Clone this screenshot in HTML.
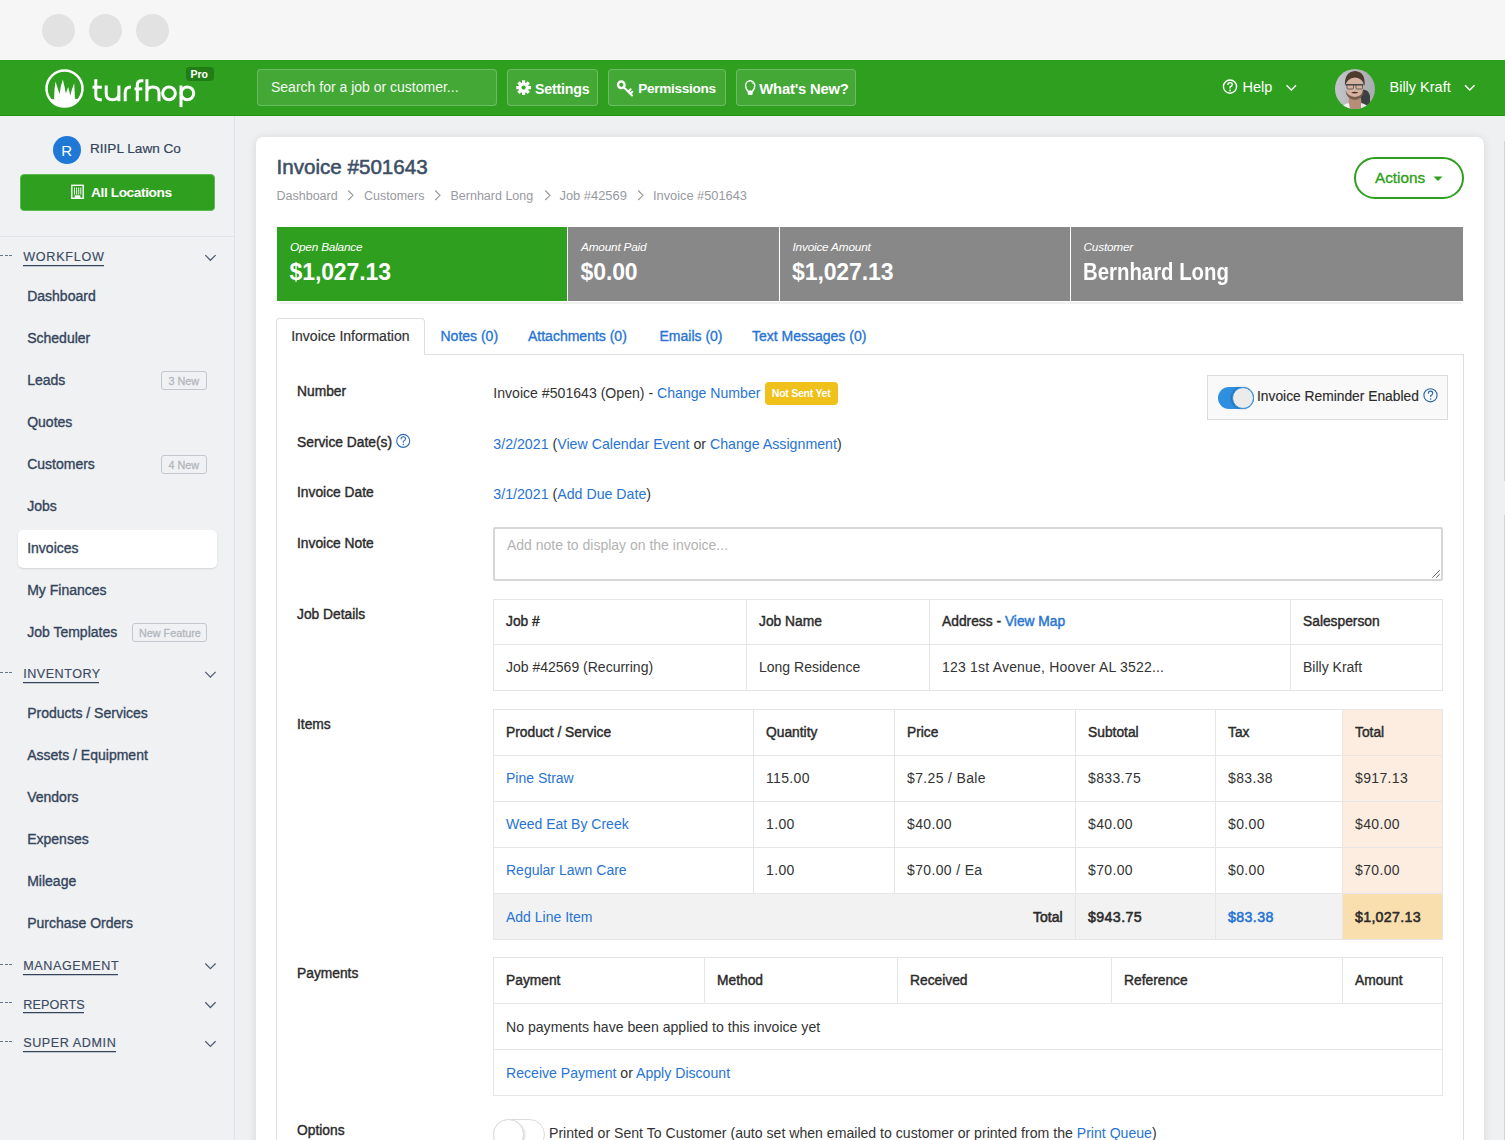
<!DOCTYPE html>
<html><head><meta charset="utf-8"><title>Invoice #501643</title>
<style>
html,body{margin:0;padding:0;}
body{width:1505px;height:1140px;overflow:hidden;position:relative;background:#eff0f2;font-family:"Liberation Sans",sans-serif;}
.t{position:absolute;white-space:nowrap;}
.r{position:absolute;box-sizing:border-box;}
svg{position:absolute;overflow:visible;}
</style></head><body>

<div class="r" style="left:0px;top:0px;width:1505px;height:60px;background:#f6f6f6;"></div>
<div class="r" style="left:42.0px;top:13.5px;width:33px;height:33px;border-radius:50%;background:#e2e2e2;"></div>
<div class="r" style="left:89.0px;top:13.5px;width:33px;height:33px;border-radius:50%;background:#e2e2e2;"></div>
<div class="r" style="left:136.0px;top:13.5px;width:33px;height:33px;border-radius:50%;background:#e2e2e2;"></div>
<div class="r" style="left:0px;top:60px;width:1505px;height:56px;background:#2f9f20;"></div>
<div class="r" style="left:0px;top:115px;width:1505px;height:1px;background:#23950f;"></div>
<svg style="left:0;top:0" width="1" height="1">
<defs><clipPath id="lc"><circle cx="64.5" cy="88.6" r="18.5"/></clipPath></defs>
<circle cx="64.5" cy="88.6" r="18" fill="none" stroke="#fff" stroke-width="2.5"/>
<g clip-path="url(#lc)"><path d="M44 102 Q50 98.5 54.2 99.3 Q54 90 55.5 81.5 Q57.5 88 59.6 94 Q60.5 86 62.8 79.6 Q64.8 87 65.8 93.5 Q67 90 68.2 87 Q69.4 91 70.2 95.5 Q71.8 89 74.2 83.3 Q74.8 92 74.9 98.8 Q79 98.5 85 102 L85 112 L44 112 Z" fill="#fff"/></g>
<g fill="none" stroke="#fff" stroke-width="3">
<path d="M95.8 79.2 V95.5 Q95.8 99.7 100 99.7 H101.8"/>
<path d="M92.5 87.2 H101.8"/>
<path d="M106.2 85.5 V93.5 Q106.2 99.7 112.5 99.7 Q118.9 99.7 118.9 93.5 V85.5 M118.9 93 V101.2"/>
<path d="M125.2 101.2 V92.5 Q125.2 87 131 87"/>
<path d="M137.3 101.2 V85 Q137.3 80.7 141.5 80.7 H143.4"/>
<path d="M134.5 88.9 H142.3"/>
<path d="M146.9 79.2 V101.2 M146.9 92.5 Q146.9 87 152.9 87 Q159 87 159 92.5 V101.2"/>
<circle cx="169" cy="93.35" r="6.35"/>
<path d="M181 85.5 V107.1"/>
<circle cx="187.4" cy="93.35" r="6.35"/>
</g>
</svg>
<div class="r" style="left:186px;top:67px;width:28px;height:14px;background:#237d17;border-radius:4px;"></div>
<div class="t" style="left:190.50px;top:69.31px;font-size:10.5px;line-height:10.5px;color:#fff;font-weight:bold;">Pro</div>
<div class="r" style="left:257px;top:69px;width:240px;height:37px;background:rgba(255,255,255,0.10);border:1.5px solid rgba(255,255,255,0.22);border-radius:4px;"></div>
<div class="t" style="left:271.00px;top:80.15px;font-size:14px;line-height:14px;color:#f3f8f2;">Search for a job or customer...</div>
<div class="r" style="left:507px;top:69px;width:91px;height:37px;background:rgba(255,255,255,0.10);border:1.5px solid rgba(255,255,255,0.22);border-radius:4px;"></div>
<div class="r" style="left:608px;top:69px;width:118px;height:37px;background:rgba(255,255,255,0.10);border:1.5px solid rgba(255,255,255,0.22);border-radius:4px;"></div>
<div class="r" style="left:736px;top:69px;width:120px;height:37px;background:rgba(255,255,255,0.10);border:1.5px solid rgba(255,255,255,0.22);border-radius:4px;"></div>
<div class="t" style="left:535.00px;top:81.98px;font-size:14.2px;line-height:14.2px;color:#fff;font-weight:bold;letter-spacing:-0.2px;">Settings</div>
<div class="t" style="left:638.30px;top:82.49px;font-size:13.6px;line-height:13.6px;color:#fff;font-weight:bold;letter-spacing:-0.3px;">Permissions</div>
<div class="t" style="left:759.30px;top:81.57px;font-size:14.8px;line-height:14.8px;color:#fff;font-weight:bold;letter-spacing:-0.2px;">What&#39;s New?</div>
<svg style="left:0;top:0" width="1" height="1">
<g transform="translate(523.6,87.6)" fill="#fff">
<circle r="5.2"/>
<g><rect x="-1.6" y="-7.3" width="3.2" height="3.4" transform="rotate(0)"/><rect x="-1.6" y="-7.3" width="3.2" height="3.4" transform="rotate(45)"/><rect x="-1.6" y="-7.3" width="3.2" height="3.4" transform="rotate(90)"/><rect x="-1.6" y="-7.3" width="3.2" height="3.4" transform="rotate(135)"/><rect x="-1.6" y="-7.3" width="3.2" height="3.4" transform="rotate(180)"/><rect x="-1.6" y="-7.3" width="3.2" height="3.4" transform="rotate(225)"/><rect x="-1.6" y="-7.3" width="3.2" height="3.4" transform="rotate(270)"/><rect x="-1.6" y="-7.3" width="3.2" height="3.4" transform="rotate(315)"/></g>
<circle r="2.1" fill="#3aa82c"/>
</g>
<g stroke="#fff" stroke-width="2" fill="none" stroke-linecap="round">
<circle cx="621.3" cy="84.8" r="3.3" stroke-width="2.3"/>
<path d="M623.8 87.3 L632 95.5 M628.2 91.7 L630.6 89.3 M630.3 93.8 L632.4 91.7"/>
</g>
<path d="M747.9 91.3 Q745.6 88.6 745.6 85.4 A4.6 4.6 0 0 1 754.8 85.4 Q754.8 88.6 752.5 91.3 Z" fill="none" stroke="#fff" stroke-width="1.4"/>
<path d="M751.6 82.2 Q753 82.8 753.3 84.3" fill="none" stroke="#fff" stroke-width="0.9"/>
<rect x="747.7" y="91" width="5" height="4" rx="1.6" fill="#fff"/>
</svg>
<svg style="left:0;top:0" width="1" height="1">
<circle cx="1230" cy="86.6" r="6.6" fill="none" stroke="#fff" stroke-width="1.4"/>
<path d="M1227.8 85 Q1227.8 82.6 1230 82.6 Q1232.3 82.6 1232.3 84.6 Q1232.3 86 1230.1 87 L1230.1 88.4" fill="none" stroke="#fff" stroke-width="1.4"/>
<circle cx="1230.1" cy="90.5" r="0.9" fill="#fff"/>
<path d="M1286.5 85.3 L1291.3 90 L1296 85.3" fill="none" stroke="#fff" stroke-width="1.4"/>
<path d="M1465 85.3 L1469.8 90 L1474.6 85.3" fill="none" stroke="#fff" stroke-width="1.4"/>
</svg>
<div class="t" style="left:1242.50px;top:79.93px;font-size:14.5px;line-height:14.5px;color:#fff;">Help</div>
<div class="t" style="left:1389.50px;top:80.03px;font-size:14.5px;line-height:14.5px;color:#fff;">Billy Kraft</div>
<svg style="left:0;top:0" width="1" height="1">
<defs><clipPath id="av"><circle cx="1355" cy="89" r="20"/></clipPath>
<linearGradient id="bgav" x1="0" y1="0" x2="1" y2="0"><stop offset="0" stop-color="#c4c5c9"/><stop offset="1" stop-color="#a9abae"/></linearGradient>
<filter id="blr" x="-20%" y="-20%" width="140%" height="140%"><feGaussianBlur stdDeviation="0.6"/></filter></defs>
<g clip-path="url(#av)">
<rect x="1335" y="69" width="40" height="40" fill="url(#bgav)"/>
<g filter="url(#blr)">
<path d="M1360 90 Q1368 88 1370 96 L1370 108 L1358 108 Z" fill="#3d3f42"/>
<path d="M1349 98 L1361 98 L1362 109 L1348 109 Z" fill="#b68d78"/>
<path d="M1340 109 Q1343 104 1349 103 L1350 109 Z" fill="#f2f2f2"/>
<path d="M1361 103 Q1367 104 1369 109 L1361 109 Z" fill="#e8e8e8"/>
<ellipse cx="1354.8" cy="88" rx="8.3" ry="11" fill="#d6b3a0"/>
<path d="M1345.5 90 Q1346 99 1354.8 100 Q1363.5 99 1364 90 Q1362 96 1354.8 97 Q1347.5 96 1345.5 90 Z" fill="#7a5d4c"/>
<path d="M1351 92.5 Q1354.8 91 1358.5 92.5 Q1354.8 94.5 1351 92.5 Z" fill="#4a2f2a"/>
<path d="M1345 86 Q1344 72 1355 71 Q1366 72 1364.5 86 Q1363 78 1355 77.5 Q1347 78 1345 86 Z" fill="#4f3b2f"/>
<path d="M1346 84.8 H1363.5" stroke="#3a3a3a" stroke-width="1.4"/>
<rect x="1347" y="84.5" width="6.5" height="4.5" rx="1" fill="none" stroke="#4a4a4a" stroke-width="0.8"/>
<rect x="1356" y="84.5" width="6.5" height="4.5" rx="1" fill="none" stroke="#4a4a4a" stroke-width="0.8"/>
</g>
</g></svg>
<div class="r" style="left:0px;top:116px;width:234px;height:1024px;background:#f0f1f3;"></div>
<div class="r" style="left:234px;top:116px;width:1px;height:1024px;background:#dfe3e8;"></div>
<div class="r" style="left:0px;top:236px;width:234px;height:1px;background:#dfe3e8;"></div>
<div class="r" style="left:53px;top:136px;width:28px;height:28px;border-radius:50%;background:#1f78d6;"></div>
<div class="t" style="left:61.30px;top:142.80px;font-size:15px;line-height:15px;color:#fff;font-weight:normal;">R</div>
<div class="t" style="left:90.00px;top:141.79px;font-size:13.6px;line-height:13.6px;color:#34455b;-webkit-text-stroke:0.2px #34455b;">RIIPL Lawn Co</div>
<div class="r" style="left:20px;top:174px;width:195px;height:37px;background:#2f9f20;border:1.5px solid #5cbb4f;border-radius:4px;"></div>
<svg style="left:0;top:0" width="1" height="1">
<rect x="71.8" y="185.3" width="11.4" height="13" fill="none" stroke="#fff" stroke-width="1.4"/>
<path d="M74.5 187.5v7 M76.6 187.5v7 M78.7 187.5v7 M80.8 187.5v7" stroke="#fff" stroke-width="0.9"/>
<rect x="74.6" y="195.3" width="5.8" height="2.6" fill="#fff"/>
</svg>
<div class="t" style="left:91.00px;top:185.70px;font-size:13.7px;line-height:13.7px;color:#fff;font-weight:bold;letter-spacing:-0.4px;">All Locations</div>
<div class="t" style="left:23.20px;top:251.33px;font-size:12.6px;line-height:12.6px;color:#3a4a62;-webkit-text-stroke:0.15px #3a4a62;letter-spacing:0.75px;">WORKFLOW</div>
<div class="r" style="left:23px;top:265px;width:81px;height:1px;background:#34455b;"></div>
<div class="r" style="left:23px;top:266px;width:81px;height:1px;background:rgba(52,69,91,0.25);"></div>
<div class="r" style="left:0px;top:255px;width:3px;height:1px;background:#66768a;"></div>
<div class="r" style="left:4.5px;top:255px;width:3.2px;height:1px;background:#66768a;"></div>
<div class="r" style="left:8.8px;top:255px;width:3.1999999999999993px;height:1px;background:#66768a;"></div>
<svg style="left:0;top:0" width="1" height="1"><path d="M205.3 255.1 L210.4 260.3 L215.6 255.1" fill="none" stroke="#4f5c70" stroke-width="1.25"/></svg>
<div class="r" style="left:18px;top:530px;width:199px;height:38px;background:#fff;border-radius:5px;box-shadow:0 1px 2px rgba(0,0,0,0.12);"></div>
<div class="t" style="left:27.20px;top:289.15px;font-size:14px;line-height:14px;color:#34455b;-webkit-text-stroke:0.35px #34455b;">Dashboard</div>
<div class="t" style="left:27.20px;top:331.15px;font-size:14px;line-height:14px;color:#34455b;-webkit-text-stroke:0.35px #34455b;">Scheduler</div>
<div class="t" style="left:27.20px;top:373.15px;font-size:14px;line-height:14px;color:#34455b;-webkit-text-stroke:0.35px #34455b;">Leads</div>
<div class="t" style="left:27.20px;top:415.15px;font-size:14px;line-height:14px;color:#34455b;-webkit-text-stroke:0.35px #34455b;">Quotes</div>
<div class="t" style="left:27.20px;top:457.15px;font-size:14px;line-height:14px;color:#34455b;-webkit-text-stroke:0.35px #34455b;">Customers</div>
<div class="t" style="left:27.20px;top:499.15px;font-size:14px;line-height:14px;color:#34455b;-webkit-text-stroke:0.35px #34455b;">Jobs</div>
<div class="t" style="left:27.20px;top:541.15px;font-size:14px;line-height:14px;color:#34455b;-webkit-text-stroke:0.35px #34455b;">Invoices</div>
<div class="t" style="left:27.20px;top:583.15px;font-size:14px;line-height:14px;color:#34455b;-webkit-text-stroke:0.35px #34455b;">My Finances</div>
<div class="t" style="left:27.20px;top:625.15px;font-size:14px;line-height:14px;color:#34455b;-webkit-text-stroke:0.35px #34455b;">Job Templates</div>
<div class="r" style="left:161px;top:371px;width:46px;height:19px;border:1px solid #c3c8ce;border-radius:3px;"></div>
<div class="t" style="left:168.50px;top:375.66px;font-size:10.8px;line-height:10.8px;color:#b2b7bd;-webkit-text-stroke:0.3px #b2b7bd;">3 New</div>
<div class="r" style="left:161px;top:455px;width:46px;height:19px;border:1px solid #c3c8ce;border-radius:3px;"></div>
<div class="t" style="left:168.50px;top:459.66px;font-size:10.8px;line-height:10.8px;color:#b2b7bd;-webkit-text-stroke:0.3px #b2b7bd;">4 New</div>
<div class="r" style="left:132px;top:623px;width:75px;height:19px;border:1px solid #c3c8ce;border-radius:3px;"></div>
<div class="t" style="left:139.00px;top:627.66px;font-size:10.8px;line-height:10.8px;color:#b2b7bd;-webkit-text-stroke:0.3px #b2b7bd;">New Feature</div>
<div class="t" style="left:23.20px;top:668.13px;font-size:12.6px;line-height:12.6px;color:#3a4a62;-webkit-text-stroke:0.15px #3a4a62;letter-spacing:0.5px;">INVENTORY</div>
<div class="r" style="left:23px;top:682px;width:76px;height:1px;background:#34455b;"></div>
<div class="r" style="left:23px;top:683px;width:76px;height:1px;background:rgba(52,69,91,0.25);"></div>
<div class="r" style="left:0px;top:672px;width:3px;height:1px;background:#66768a;"></div>
<div class="r" style="left:4.5px;top:672px;width:3.2px;height:1px;background:#66768a;"></div>
<div class="r" style="left:8.8px;top:672px;width:3.1999999999999993px;height:1px;background:#66768a;"></div>
<svg style="left:0;top:0" width="1" height="1"><path d="M205.3 671.9 L210.4 677.1 L215.6 671.9" fill="none" stroke="#4f5c70" stroke-width="1.25"/></svg>
<div class="t" style="left:27.20px;top:706.15px;font-size:14px;line-height:14px;color:#34455b;-webkit-text-stroke:0.35px #34455b;">Products / Services</div>
<div class="t" style="left:27.20px;top:748.15px;font-size:14px;line-height:14px;color:#34455b;-webkit-text-stroke:0.35px #34455b;">Assets / Equipment</div>
<div class="t" style="left:27.20px;top:790.15px;font-size:14px;line-height:14px;color:#34455b;-webkit-text-stroke:0.35px #34455b;">Vendors</div>
<div class="t" style="left:27.20px;top:832.15px;font-size:14px;line-height:14px;color:#34455b;-webkit-text-stroke:0.35px #34455b;">Expenses</div>
<div class="t" style="left:27.20px;top:874.15px;font-size:14px;line-height:14px;color:#34455b;-webkit-text-stroke:0.35px #34455b;">Mileage</div>
<div class="t" style="left:27.20px;top:916.15px;font-size:14px;line-height:14px;color:#34455b;-webkit-text-stroke:0.35px #34455b;">Purchase Orders</div>
<div class="t" style="left:23.20px;top:959.73px;font-size:12.6px;line-height:12.6px;color:#3a4a62;-webkit-text-stroke:0.15px #3a4a62;letter-spacing:0.58px;">MANAGEMENT</div>
<div class="r" style="left:23px;top:974px;width:95px;height:1px;background:#34455b;"></div>
<div class="r" style="left:23px;top:975px;width:95px;height:1px;background:rgba(52,69,91,0.25);"></div>
<div class="r" style="left:0px;top:964px;width:3px;height:1px;background:#66768a;"></div>
<div class="r" style="left:4.5px;top:964px;width:3.2px;height:1px;background:#66768a;"></div>
<div class="r" style="left:8.8px;top:964px;width:3.1999999999999993px;height:1px;background:#66768a;"></div>
<svg style="left:0;top:0" width="1" height="1"><path d="M205.3 963.5 L210.4 968.7 L215.6 963.5" fill="none" stroke="#4f5c70" stroke-width="1.25"/></svg>
<div class="t" style="left:23.20px;top:998.53px;font-size:12.6px;line-height:12.6px;color:#3a4a62;-webkit-text-stroke:0.15px #3a4a62;letter-spacing:0.15px;">REPORTS</div>
<div class="r" style="left:23px;top:1012px;width:61px;height:1px;background:#34455b;"></div>
<div class="r" style="left:23px;top:1013px;width:61px;height:1px;background:rgba(52,69,91,0.25);"></div>
<div class="r" style="left:0px;top:1002px;width:3px;height:1px;background:#66768a;"></div>
<div class="r" style="left:4.5px;top:1002px;width:3.2px;height:1px;background:#66768a;"></div>
<div class="r" style="left:8.8px;top:1002px;width:3.1999999999999993px;height:1px;background:#66768a;"></div>
<svg style="left:0;top:0" width="1" height="1"><path d="M205.3 1002.3 L210.4 1007.5 L215.6 1002.3" fill="none" stroke="#4f5c70" stroke-width="1.25"/></svg>
<div class="t" style="left:23.20px;top:1037.43px;font-size:12.6px;line-height:12.6px;color:#3a4a62;-webkit-text-stroke:0.15px #3a4a62;letter-spacing:0.58px;">SUPER ADMIN</div>
<div class="r" style="left:23px;top:1051px;width:93px;height:1px;background:#34455b;"></div>
<div class="r" style="left:23px;top:1052px;width:93px;height:1px;background:rgba(52,69,91,0.25);"></div>
<div class="r" style="left:0px;top:1041px;width:3px;height:1px;background:#66768a;"></div>
<div class="r" style="left:4.5px;top:1041px;width:3.2px;height:1px;background:#66768a;"></div>
<div class="r" style="left:8.8px;top:1041px;width:3.1999999999999993px;height:1px;background:#66768a;"></div>
<svg style="left:0;top:0" width="1" height="1"><path d="M205.3 1041.2 L210.4 1046.3999999999999 L215.6 1041.2" fill="none" stroke="#4f5c70" stroke-width="1.25"/></svg>
<div class="r" style="left:256px;top:137px;width:1228px;height:1023px;background:#fff;border-radius:7px;box-shadow:0 1px 10px rgba(0,0,0,0.11);"></div>
<div class="r" style="left:1504px;top:141px;width:1px;height:340px;background:#d3d4d6;"></div>
<div class="r" style="left:1504px;top:515px;width:1px;height:625px;background:#d3d4d6;"></div>
<div class="t" style="left:276.50px;top:156.86px;font-size:20.6px;line-height:20.6px;color:#3d4f66;-webkit-text-stroke:0.55px #3d4f66;">Invoice #501643</div>
<div class="t" style="left:276.50px;top:190.02px;font-size:12.5px;line-height:12.5px;color:#979a9f;">Dashboard</div>
<div class="t" style="left:364.00px;top:190.02px;font-size:12.5px;line-height:12.5px;color:#979a9f;">Customers</div>
<div class="t" style="left:450.50px;top:190.02px;font-size:12.5px;line-height:12.5px;color:#979a9f;">Bernhard Long</div>
<div class="t" style="left:559.50px;top:189.68px;font-size:12.9px;line-height:12.9px;color:#979a9f;">Job #42569</div>
<div class="t" style="left:653.00px;top:189.76px;font-size:12.8px;line-height:12.8px;color:#979a9f;">Invoice #501643</div>
<svg style="left:0;top:0" width="1" height="1"><path d="M348.2 190.5 L353.0 195.3 L348.2 200" fill="none" stroke="#999" stroke-width="1.1"/><path d="M435.2 190.5 L440.0 195.3 L435.2 200" fill="none" stroke="#999" stroke-width="1.1"/><path d="M545.2 190.5 L550.0 195.3 L545.2 200" fill="none" stroke="#999" stroke-width="1.1"/><path d="M638.2 190.5 L643.0 195.3 L638.2 200" fill="none" stroke="#999" stroke-width="1.1"/></svg>
<div class="r" style="left:1354px;top:157px;width:110px;height:42px;border:2px solid #2f9f20;border-radius:21px;"></div>
<div class="t" style="left:1375.00px;top:170.35px;font-size:15.3px;line-height:15.3px;color:#2f9f20;-webkit-text-stroke:0.35px #2f9f20;">Actions</div>
<svg style="left:0;top:0" width="1" height="1"><path d="M1433.5 176.5 L1442.5 176.5 L1438 181 Z" fill="#2f9f20"/></svg>
<div class="r" style="left:277px;top:227px;width:1186px;height:75px;box-shadow:0 1.5px 1px rgba(0,0,0,0.06);"></div>
<div class="r" style="left:277px;top:227px;width:290px;height:74px;background:#2f9f20;"></div>
<div class="r" style="left:568px;top:227px;width:211px;height:74px;background:#888;"></div>
<div class="r" style="left:780px;top:227px;width:290px;height:74px;background:#888;"></div>
<div class="r" style="left:1071px;top:227px;width:392px;height:74px;background:#888;"></div>
<div class="t" style="left:290.00px;top:241.51px;font-size:11.8px;line-height:11.8px;color:#fff;font-style:italic;letter-spacing:-0.2px;">Open Balance</div>
<div class="t" style="left:289.50px;top:260.53px;font-size:23px;line-height:23px;color:#fff;font-weight:bold;letter-spacing:-0.1px;">$1,027.13</div>
<div class="t" style="left:581.00px;top:241.51px;font-size:11.8px;line-height:11.8px;color:#fff;font-style:italic;letter-spacing:-0.2px;">Amount Paid</div>
<div class="t" style="left:580.50px;top:260.53px;font-size:23px;line-height:23px;color:#fff;font-weight:bold;letter-spacing:-0.1px;">$0.00</div>
<div class="t" style="left:792.50px;top:241.51px;font-size:11.8px;line-height:11.8px;color:#fff;font-style:italic;letter-spacing:-0.2px;">Invoice Amount</div>
<div class="t" style="left:792.00px;top:260.53px;font-size:23px;line-height:23px;color:#fff;font-weight:bold;letter-spacing:-0.1px;">$1,027.13</div>
<div class="t" style="left:1083.50px;top:241.51px;font-size:11.8px;line-height:11.8px;color:#fff;font-style:italic;letter-spacing:-0.2px;">Customer</div>
<div class="t" style="left:1083.00px;top:260.53px;font-size:23px;line-height:23px;color:#fff;font-weight:bold;transform:scaleX(0.885);transform-origin:0 0;">Bernhard Long</div>
<div class="r" style="left:276px;top:354px;width:1188px;height:806px;border:1px solid #dedede;"></div>
<div class="r" style="left:276px;top:318px;width:149px;height:37px;background:#fff;border:1px solid #dedede;border-bottom:none;border-radius:4px 4px 0 0;"></div>
<div class="t" style="left:291.20px;top:329.35px;font-size:14px;line-height:14px;color:#333;-webkit-text-stroke:0.2px #333;">Invoice Information</div>
<div class="t" style="left:440.50px;top:329.15px;font-size:14px;line-height:14px;color:#2774d4;-webkit-text-stroke:0.35px #2774d4;">Notes (0)</div>
<div class="t" style="left:528.00px;top:329.15px;font-size:14px;line-height:14px;color:#2774d4;-webkit-text-stroke:0.35px #2774d4;">Attachments (0)</div>
<div class="t" style="left:659.50px;top:329.15px;font-size:14px;line-height:14px;color:#2774d4;-webkit-text-stroke:0.35px #2774d4;">Emails (0)</div>
<div class="t" style="left:752.00px;top:329.15px;font-size:14px;line-height:14px;color:#2774d4;-webkit-text-stroke:0.35px #2774d4;">Text Messages (0)</div>
<div class="t" style="left:297.00px;top:384.72px;font-size:13.8px;line-height:13.8px;color:#2b2b2b;-webkit-text-stroke:0.4px #2b2b2b;">Number</div>
<div class="t" style="left:493.30px;top:386.26px;font-size:14.1px;line-height:14.1px;color:#333;">Invoice #501643 (Open) - <span style="color:#2774d4">Change Number</span></div>
<div class="r" style="left:765px;top:382px;width:73px;height:23px;background:#f0c11a;border-radius:4px;"></div>
<div class="t" style="left:771.80px;top:388.33px;font-size:10.6px;line-height:10.6px;color:#fff;font-weight:bold;letter-spacing:-0.3px;">Not Sent Yet</div>
<div class="r" style="left:1207px;top:375px;width:241px;height:45px;background:#f9f9f9;border:1px solid #dcdcdc;"></div>
<div class="r" style="left:1217.5px;top:387px;width:36.0px;height:22px;background:#2f8fe0;border-radius:11px;"></div>
<div class="r" style="left:1231.5px;top:387px;width:22.0px;height:22px;background:#ebebeb;border:1px solid #2f8fe0;border-radius:50%;box-shadow:-1px 0 2px rgba(0,0,0,0.25);"></div>
<div class="t" style="left:1257.00px;top:389.92px;font-size:13.8px;line-height:13.8px;color:#2b2b2b;-webkit-text-stroke:0.15px #2b2b2b;">Invoice Reminder Enabled</div>
<svg style="left:0;top:0" width="1" height="1"><circle cx="1430.5" cy="395.3" r="6.6" fill="none" stroke="#2764a8" stroke-width="1.1"/><path d="M1428.3 393.7 Q1428.3 391.1 1430.5 391.1 Q1432.8 391.1 1432.8 393.3 Q1432.8 394.7 1430.6 395.7 L1430.6 397.1" fill="none" stroke="#2764a8" stroke-width="1.1"/><circle cx="1430.6" cy="399.0" r="0.75" fill="#2764a8"/></svg>
<div class="t" style="left:297.00px;top:435.52px;font-size:13.8px;line-height:13.8px;color:#2b2b2b;-webkit-text-stroke:0.4px #2b2b2b;">Service Date(s)</div>
<svg style="left:0;top:0" width="1" height="1"><circle cx="403.2" cy="440.9" r="6.5" fill="none" stroke="#2f6db5" stroke-width="1.1"/><path d="M401.0 439.29999999999995 Q401.0 436.7 403.2 436.7 Q405.5 436.7 405.5 438.9 Q405.5 440.29999999999995 403.3 441.29999999999995 L403.3 442.7" fill="none" stroke="#2f6db5" stroke-width="1.1"/><circle cx="403.3" cy="444.59999999999997" r="0.75" fill="#2f6db5"/></svg>
<div class="t" style="left:493.30px;top:436.68px;font-size:14.2px;line-height:14.2px;color:#333;"><span style="color:#2774d4">3/2/2021</span> (<span style="color:#2774d4">View Calendar Event</span> or <span style="color:#2774d4">Change Assignment</span>)</div>
<div class="t" style="left:297.00px;top:485.72px;font-size:13.8px;line-height:13.8px;color:#2b2b2b;-webkit-text-stroke:0.4px #2b2b2b;">Invoice Date</div>
<div class="t" style="left:493.30px;top:486.58px;font-size:14.2px;line-height:14.2px;color:#333;"><span style="color:#2774d4">3/1/2021</span> (<span style="color:#2774d4">Add Due Date</span>)</div>
<div class="t" style="left:297.00px;top:536.52px;font-size:13.8px;line-height:13.8px;color:#2b2b2b;-webkit-text-stroke:0.4px #2b2b2b;">Invoice Note</div>
<div class="r" style="left:493px;top:527px;width:950px;height:54px;border:2px solid #d6d6d6;border-radius:2px;"></div>
<div class="t" style="left:507.00px;top:538.15px;font-size:14px;line-height:14px;color:#b3b3b3;">Add note to display on the invoice...</div>
<svg style="left:0;top:0" width="1" height="1"><path d="M1432.3 577.7 L1439.8 570.2 M1436.1 577.7 L1439.8 574" stroke="#555" stroke-width="0.9"/></svg>
<div class="t" style="left:297.00px;top:608.32px;font-size:13.8px;line-height:13.8px;color:#2b2b2b;-webkit-text-stroke:0.4px #2b2b2b;">Job Details</div>
<div class="r" style="left:493px;top:599px;width:950px;height:92px;border:1px solid #e6e6e6;"></div>
<div class="r" style="left:493px;top:644px;width:949px;height:1px;background:#e6e6e6;"></div>
<div class="r" style="left:746px;top:599px;width:1px;height:91px;background:#e6e6e6;"></div>
<div class="r" style="left:929px;top:599px;width:1px;height:91px;background:#e6e6e6;"></div>
<div class="r" style="left:1290px;top:599px;width:1px;height:91px;background:#e6e6e6;"></div>
<div class="t" style="left:506.00px;top:614.52px;font-size:13.8px;line-height:13.8px;color:#2b2b2b;-webkit-text-stroke:0.42px #2b2b2b;">Job #</div>
<div class="t" style="left:759.00px;top:614.52px;font-size:13.8px;line-height:13.8px;color:#2b2b2b;-webkit-text-stroke:0.42px #2b2b2b;">Job Name</div>
<div class="t" style="left:942.00px;top:614.52px;font-size:13.8px;line-height:13.8px;color:#2b2b2b;-webkit-text-stroke:0.42px #2b2b2b;">Address - <span style="color:#2774d4;-webkit-text-stroke-color:#2774d4">View Map</span></div>
<div class="t" style="left:1303.00px;top:614.52px;font-size:13.8px;line-height:13.8px;color:#2b2b2b;-webkit-text-stroke:0.42px #2b2b2b;">Salesperson</div>
<div class="t" style="left:506.00px;top:660.45px;font-size:14px;line-height:14px;color:#333;">Job #42569 (Recurring)</div>
<div class="t" style="left:759.00px;top:660.45px;font-size:14px;line-height:14px;color:#333;">Long Residence</div>
<div class="t" style="left:942.00px;top:660.45px;font-size:14px;line-height:14px;color:#333;letter-spacing:0.2px;">123 1st Avenue, Hoover AL 3522...</div>
<div class="t" style="left:1303.00px;top:660.45px;font-size:14px;line-height:14px;color:#333;">Billy Kraft</div>
<div class="t" style="left:297.00px;top:718.32px;font-size:13.8px;line-height:13.8px;color:#2b2b2b;-webkit-text-stroke:0.4px #2b2b2b;">Items</div>
<div class="r" style="left:1342px;top:709px;width:100px;height:184px;background:#fcede0;"></div>
<div class="r" style="left:493px;top:893px;width:849px;height:46px;background:#f2f2f2;"></div>
<div class="r" style="left:1342px;top:893px;width:100px;height:46px;background:#f9dfae;"></div>
<div class="r" style="left:493px;top:709px;width:950px;height:231px;border:1px solid #e6e6e6;"></div>
<div class="r" style="left:493px;top:755px;width:949px;height:1px;background:#e6e6e6;"></div>
<div class="r" style="left:493px;top:801px;width:949px;height:1px;background:#e6e6e6;"></div>
<div class="r" style="left:493px;top:847px;width:949px;height:1px;background:#e6e6e6;"></div>
<div class="r" style="left:493px;top:893px;width:949px;height:1px;background:#e6e6e6;"></div>
<div class="r" style="left:753px;top:709px;width:1px;height:184px;background:#e6e6e6;"></div>
<div class="r" style="left:894px;top:709px;width:1px;height:184px;background:#e6e6e6;"></div>
<div class="r" style="left:1075px;top:709px;width:1px;height:230px;background:#e6e6e6;"></div>
<div class="r" style="left:1215px;top:709px;width:1px;height:230px;background:#e6e6e6;"></div>
<div class="r" style="left:1342px;top:709px;width:1px;height:230px;background:#e6e6e6;"></div>
<div class="t" style="left:506.00px;top:726.12px;font-size:13.8px;line-height:13.8px;color:#2b2b2b;-webkit-text-stroke:0.42px #2b2b2b;">Product / Service</div>
<div class="t" style="left:766.00px;top:726.12px;font-size:13.8px;line-height:13.8px;color:#2b2b2b;-webkit-text-stroke:0.42px #2b2b2b;">Quantity</div>
<div class="t" style="left:907.00px;top:726.12px;font-size:13.8px;line-height:13.8px;color:#2b2b2b;-webkit-text-stroke:0.42px #2b2b2b;">Price</div>
<div class="t" style="left:1088.00px;top:726.12px;font-size:13.8px;line-height:13.8px;color:#2b2b2b;-webkit-text-stroke:0.42px #2b2b2b;">Subtotal</div>
<div class="t" style="left:1228.00px;top:726.12px;font-size:13.8px;line-height:13.8px;color:#2b2b2b;-webkit-text-stroke:0.42px #2b2b2b;">Tax</div>
<div class="t" style="left:1355.00px;top:726.12px;font-size:13.8px;line-height:13.8px;color:#2b2b2b;-webkit-text-stroke:0.42px #2b2b2b;">Total</div>
<div class="t" style="left:506.00px;top:771.35px;font-size:14px;line-height:14px;color:#2774d4;">Pine Straw</div>
<div class="t" style="left:766.00px;top:771.35px;font-size:14px;line-height:14px;color:#333;letter-spacing:0.35px;">115.00</div>
<div class="t" style="left:907.00px;top:771.35px;font-size:14px;line-height:14px;color:#333;letter-spacing:0.35px;">$7.25 / Bale</div>
<div class="t" style="left:1088.00px;top:771.35px;font-size:14px;line-height:14px;color:#333;letter-spacing:0.35px;">$833.75</div>
<div class="t" style="left:1228.00px;top:771.35px;font-size:14px;line-height:14px;color:#333;letter-spacing:0.35px;">$83.38</div>
<div class="t" style="left:1355.00px;top:771.35px;font-size:14px;line-height:14px;color:#333;letter-spacing:0.35px;">$917.13</div>
<div class="t" style="left:506.00px;top:817.35px;font-size:14px;line-height:14px;color:#2774d4;">Weed Eat By Creek</div>
<div class="t" style="left:766.00px;top:817.35px;font-size:14px;line-height:14px;color:#333;letter-spacing:0.35px;">1.00</div>
<div class="t" style="left:907.00px;top:817.35px;font-size:14px;line-height:14px;color:#333;letter-spacing:0.35px;">$40.00</div>
<div class="t" style="left:1088.00px;top:817.35px;font-size:14px;line-height:14px;color:#333;letter-spacing:0.35px;">$40.00</div>
<div class="t" style="left:1228.00px;top:817.35px;font-size:14px;line-height:14px;color:#333;letter-spacing:0.35px;">$0.00</div>
<div class="t" style="left:1355.00px;top:817.35px;font-size:14px;line-height:14px;color:#333;letter-spacing:0.35px;">$40.00</div>
<div class="t" style="left:506.00px;top:863.35px;font-size:14px;line-height:14px;color:#2774d4;">Regular Lawn Care</div>
<div class="t" style="left:766.00px;top:863.35px;font-size:14px;line-height:14px;color:#333;letter-spacing:0.35px;">1.00</div>
<div class="t" style="left:907.00px;top:863.35px;font-size:14px;line-height:14px;color:#333;letter-spacing:0.35px;">$70.00 / Ea</div>
<div class="t" style="left:1088.00px;top:863.35px;font-size:14px;line-height:14px;color:#333;letter-spacing:0.35px;">$70.00</div>
<div class="t" style="left:1228.00px;top:863.35px;font-size:14px;line-height:14px;color:#333;letter-spacing:0.35px;">$0.00</div>
<div class="t" style="left:1355.00px;top:863.35px;font-size:14px;line-height:14px;color:#333;letter-spacing:0.35px;">$70.00</div>
<div class="t" style="left:506.00px;top:909.95px;font-size:14px;line-height:14px;color:#2774d4;">Add Line Item</div>
<div class="t" style="left:1033.00px;top:909.95px;font-size:14px;line-height:14px;color:#2b2b2b;-webkit-text-stroke:0.55px #2b2b2b;">Total</div>
<div class="t" style="left:1088.00px;top:909.78px;font-size:14.2px;line-height:14.2px;color:#2b2b2b;-webkit-text-stroke:0.55px #2b2b2b;letter-spacing:0.4px;">$943.75</div>
<div class="t" style="left:1228.00px;top:909.78px;font-size:14.2px;line-height:14.2px;color:#2774d4;-webkit-text-stroke:0.55px #2774d4;letter-spacing:0.4px;">$83.38</div>
<div class="t" style="left:1355.00px;top:909.78px;font-size:14.2px;line-height:14.2px;color:#2b2b2b;-webkit-text-stroke:0.55px #2b2b2b;letter-spacing:0.3px;">$1,027.13</div>
<div class="t" style="left:297.00px;top:966.82px;font-size:13.8px;line-height:13.8px;color:#2b2b2b;-webkit-text-stroke:0.4px #2b2b2b;">Payments</div>
<div class="r" style="left:493px;top:957px;width:950px;height:139px;border:1px solid #e6e6e6;"></div>
<div class="r" style="left:493px;top:1003px;width:949px;height:1px;background:#e6e6e6;"></div>
<div class="r" style="left:493px;top:1049px;width:949px;height:1px;background:#e6e6e6;"></div>
<div class="r" style="left:704px;top:957px;width:1px;height:46px;background:#e6e6e6;"></div>
<div class="r" style="left:897px;top:957px;width:1px;height:46px;background:#e6e6e6;"></div>
<div class="r" style="left:1111px;top:957px;width:1px;height:46px;background:#e6e6e6;"></div>
<div class="r" style="left:1342px;top:957px;width:1px;height:46px;background:#e6e6e6;"></div>
<div class="t" style="left:506.00px;top:973.92px;font-size:13.8px;line-height:13.8px;color:#2b2b2b;-webkit-text-stroke:0.42px #2b2b2b;">Payment</div>
<div class="t" style="left:717.00px;top:973.92px;font-size:13.8px;line-height:13.8px;color:#2b2b2b;-webkit-text-stroke:0.42px #2b2b2b;">Method</div>
<div class="t" style="left:910.00px;top:973.92px;font-size:13.8px;line-height:13.8px;color:#2b2b2b;-webkit-text-stroke:0.42px #2b2b2b;">Received</div>
<div class="t" style="left:1124.00px;top:973.92px;font-size:13.8px;line-height:13.8px;color:#2b2b2b;-webkit-text-stroke:0.42px #2b2b2b;">Reference</div>
<div class="t" style="left:1355.00px;top:973.92px;font-size:13.8px;line-height:13.8px;color:#2b2b2b;-webkit-text-stroke:0.42px #2b2b2b;">Amount</div>
<div class="t" style="left:506.00px;top:1019.66px;font-size:14.1px;line-height:14.1px;color:#333;">No payments have been applied to this invoice yet</div>
<div class="t" style="left:506.00px;top:1065.66px;font-size:14.1px;line-height:14.1px;color:#333;"><span style="color:#2774d4">Receive Payment</span> or <span style="color:#2774d4">Apply Discount</span></div>
<div class="t" style="left:297.00px;top:1123.82px;font-size:13.8px;line-height:13.8px;color:#2b2b2b;-webkit-text-stroke:0.4px #2b2b2b;">Options</div>
<div class="r" style="left:493px;top:1119px;width:52px;height:31px;border:1px solid #dcdcdc;border-radius:16px;background:#fff;"></div>
<div class="r" style="left:493px;top:1119px;width:31px;height:31px;border:1px solid #dcdcdc;border-radius:50%;background:#fff;box-shadow:1px 1px 2px rgba(0,0,0,0.15);"></div>
<div class="t" style="left:549.00px;top:1126.36px;font-size:14.1px;line-height:14.1px;color:#333;">Printed or Sent To Customer (auto set when emailed to customer or printed from the <span style="color:#2774d4">Print Queue</span>)</div>
</body></html>
